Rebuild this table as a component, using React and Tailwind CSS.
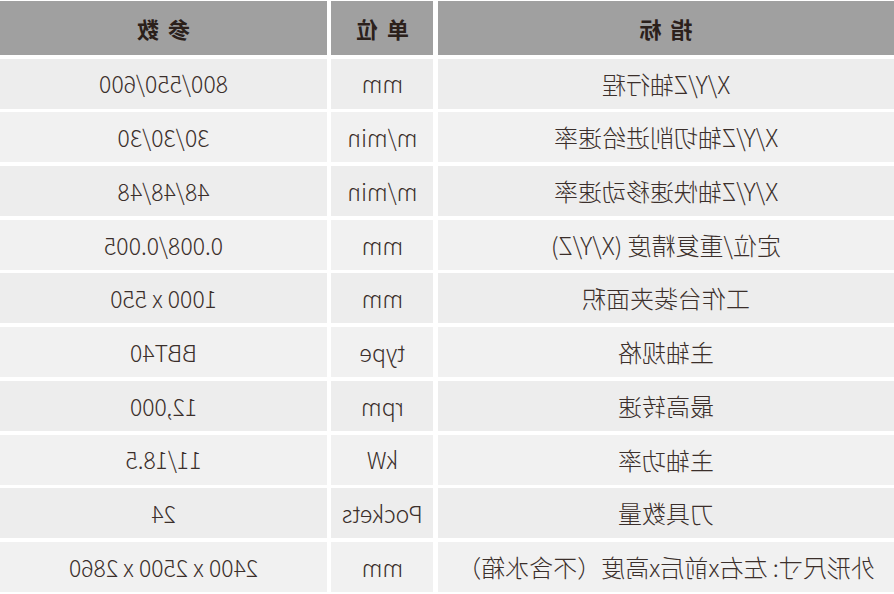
import React from 'react'

const rows = [
  ['X/Y/Z轴行程', 'mm', '800/550/600'],
  ['X/Y/Z轴切削进给速率', 'm/min', '30/30/30'],
  ['X/Y/Z轴快速移动速率', 'm/min', '48/48/48'],
  ['定位/重复精度 (X/Y/Z)', 'mm', '0.008/0.005'],
  ['工作台装夹面积', 'mm', '1000 x 550'],
  ['主轴规格', 'type', 'BBT40'],
  ['最高转速', 'rpm', '12,000'],
  ['主轴功率', 'kW', '11/18.5'],
  ['刀具数量', 'Pockets', '24'],
  ['外形尺寸: 左右x前后x高度（不含水箱）', 'mm', '2400 x 2500 x 2860'],
]

const font = { fontFamily: '"Noto Sans CJK SC", "Noto Sans", sans-serif' }

export default function App() {
  return (
    <div className="h-[594px] w-[894px] overflow-hidden bg-white">
      {/* reference is mirrored horizontally */}
      <div
        className="-scale-x-100 grid grid-cols-[456px_102px_327px] gap-x-[4.5px] gap-y-[3.7px] pt-px"
        style={font}
      >
        {['指标', '单位', '参数'].map((h) => (
          <div
            key={h}
            className="flex h-[54px] items-center justify-center bg-[#a0a0a0] text-[22px] font-bold tracking-[9px] text-[#2b201b]"
          >
            <span className="pl-[9px]">{h}</span>
          </div>
        ))}
        {rows.map((r, i) =>
          r.map((c, j) => (
            <div
              key={i + '-' + j}
              className={`flex h-[50px] items-center justify-center whitespace-nowrap font-light text-[#3b2f2b] ${
                j === 0 ? 'text-[24px]' : 'text-[23px]'
              } ${i % 2 === 0 ? 'bg-[#ededed]' : 'bg-[#f1f1f1]'}`}
            >
              {c}
            </div>
          ))
        )}
      </div>
    </div>
  )
}
